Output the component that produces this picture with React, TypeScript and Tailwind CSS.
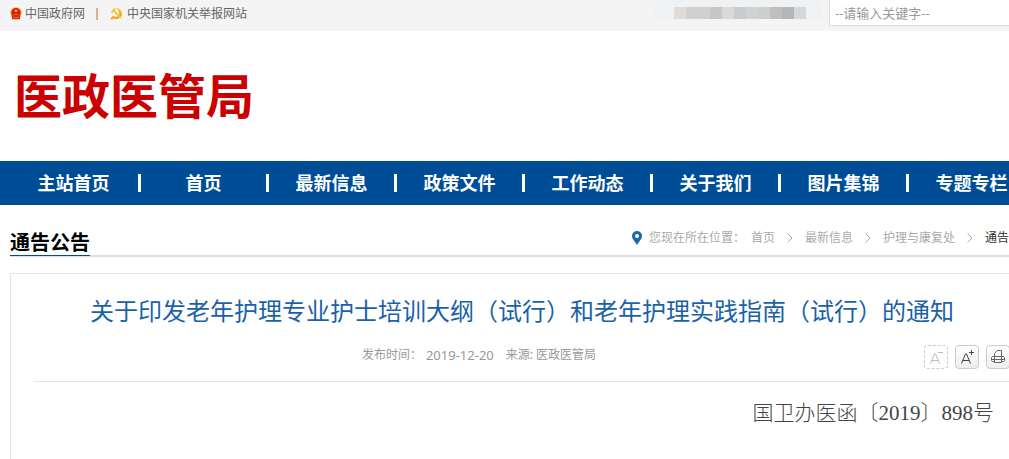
import React, { useState } from 'react';

const navItems = ['首页', '最新信息', '政策文件', '工作动态', '关于我们', '图片集锦', '专题专栏'];

const crumbs = ['首页', '最新信息', '护理与康复处'];

function EmblemIcon() {
  return (
    <svg viewBox="0 0 12 13" className="h-[13px] w-3 shrink-0" aria-hidden="true">
      <circle cx="6" cy="5.8" r="5.6" fill="#eea23c" />
      <circle cx="6" cy="5.8" r="4.7" fill="#dd1a10" />
      <path d="M6 1.8l.6 1.2 1.3.2-.9.9.2 1.3L6 4.8l-1.2.6.2-1.3-.9-.9 1.3-.2z" fill="#ffb52a" />
      <path d="M3.500 7.600h5" stroke="#f08a22" strokeWidth=".8" />
      <path d="M1.500 8.800h9L9.800 12.500l-2.200-.4-1.600.7-1.600-.7-2.200.4z" fill="#d4230f" />
      <path d="M2.400 9.800l2 .9h3.200l2-.9" stroke="#f5a623" strokeWidth=".7" fill="none" />
    </svg>
  );
}

function PartyIcon() {
  return (
    <svg viewBox="0 0 13 13" className="size-[13px] shrink-0" aria-hidden="true">
      <path d="M6.2.9c4.200.3 6.300 3.400 5.800 6.600-.5 3.200-3.800 5.200-7 4.400l-1.200-.6L2 12.800.5 11.500l1.800-2 .9-.4c2.300 1.500 5 .9 5.800-1.500C9.800 5.300 8.500 2.500 6.200.9z" fill="#f0a51a" />
      <path d="M.7 4.700L4 1l2 .8-1.100 1.400 6.900 7-1.500 1.500-6.800-7L2.300 6z" fill="#f8c832" />
      <path d="M7.200 1.600c3.200.9 4.500 3.200 4.100 5.600" stroke="#ffe36a" strokeWidth=".8" fill="none" />
    </svg>
  );
}

function PinIcon() {
  return (
    <svg viewBox="0 0 10 14" className="h-[14px] w-[10px] shrink-0" aria-hidden="true">
      <path d="M5 0a5 5 0 0 0-5 5c0 3 3 5.500 5 9 2-3.500 5-6 5-9a5 5 0 0 0-5-5zm0 3a2 2 0 1 1 0 4 2 2 0 0 1 0-4z" fill="#1a67ae" fillRule="evenodd" />
    </svg>
  );
}

function Chevron() {
  return (
    <span className="flex w-[30px] justify-center" aria-hidden="true">
      <svg viewBox="0 0 6 10" className="h-[10px] w-[6px]">
        <path d="M.5.5L5 5 .5 9.500" fill="none" stroke="#aaa" />
      </svg>
    </span>
  );
}

function TopBar() {
  const [keyword, setKeyword] = useState('');

  return (
    <div className="flex h-[31px] items-start justify-between bg-[#f4f4f4] pl-[10px] text-xs text-[#666]">
      <div className="flex h-[27px] items-center">
        <a href="#" className="flex items-center gap-[3px]">
          <EmblemIcon />
          中国政府网
        </a>
        <span className="ml-[11px] mr-3 h-3 w-0.5 bg-[#d8b48c]" />
        <a href="#" className="flex items-center gap-1">
          <PartyIcon />
          中央国家机关举报网站
        </a>
      </div>
      <div className="flex items-start">
        <div className="mr-[7px] flex h-[19px] w-[168px] items-end rounded-t-lg bg-[#f0f1f3] pl-5">
          <div className="flex h-3 shrink-0">
            <i className="w-3 bg-[#dfdbd9]" />
            <i className="w-3 bg-[#cfd0d1]" />
            <i className="w-3 bg-[#d0d0d0]" />
            <i className="w-3 bg-[#c8c6c4]" />
            <i className="w-3 bg-[#d8d9d9]" />
            <i className="w-3 bg-[#c9cbce]" />
            <i className="w-3 bg-[#d1d2d3]" />
            <i className="w-3 bg-[#cccfce]" />
            <i className="w-3 bg-[#bfbfbf]" />
            <i className="w-3 bg-[#b5b6b9]" />
            <i className="w-3 bg-[#d6d7da]" />
          </div>
        </div>
        <input
          type="text"
          aria-label="请输入关键字"
          placeholder="--请输入关键字--"
          value={keyword}
          onChange={(e) => setKeyword(e.target.value)}
          className="h-[26px] w-[180px] border border-t-0 border-r-0 border-[#ddd] bg-white px-[5px] text-[13px] outline-none placeholder:text-[#999]"
        />
      </div>
    </div>
  );
}

function Nav() {
  return (
    <nav className="flex h-11 items-center bg-[#004d97] pl-[9px] text-lg font-bold text-white">
      <a href="#" className="w-[129px] shrink-0 text-center">主站首页</a>
      {navItems.map((item) => (
        <div key={item} className="flex w-32 shrink-0 items-center">
          <span className="h-[18px] w-[3px] bg-white" />
          <a href="#" className="flex-1 text-center">{item}</a>
        </div>
      ))}
    </nav>
  );
}

export default function App() {
  const [large, setLarge] = useState(false);

  return (
    <div className="flex min-h-screen flex-col overflow-hidden bg-white font-['Noto_Sans','Noto_Sans_CJK_SC',sans-serif]">
      <TopBar />

      <header className="flex h-[130px] items-center pl-[14px]">
        <h1 className="text-5xl leading-none font-bold text-[#c00]">医政医管局</h1>
      </header>

      <Nav />

      {/* the content column runs a little past the right edge */}
      <main className="-mr-[27px] ml-[10px] flex flex-1 flex-col">
        <div className="mt-5 flex h-8 items-stretch justify-between border-b-2 border-[#dedede]">
          <h2 className="-mb-px border-b border-[#004d97] pt-1 text-xl leading-7 font-bold text-black">通告公告</h2>
          <div className="flex items-center pr-[27px] pb-1 text-xs whitespace-nowrap text-[#aaa]">
            <PinIcon />
            <span className="ml-[7px] w-[102px]">您现在所在位置：</span>
            {crumbs.map((c) => (
              <React.Fragment key={c}>
                <a href="#">{c}</a>
                <Chevron />
              </React.Fragment>
            ))}
            <span className="text-[#333]">通告</span>
          </div>
        </div>

        <article className="mt-4 flex-1 border border-b-0 border-[#e5e5e5] pr-[25px] pl-[23px]">
          <h3 className="mt-[21px] text-center text-2xl leading-8 whitespace-nowrap text-[#1a62a8]">
            关于印发老年护理专业护士培训大纲（试行）和老年护理实践指南（试行）的通知
          </h3>
          <div className="flex h-[55px] items-start border-b border-[#e5e5e5] pt-[18px] text-[#999]">
            <p className="flex flex-1 items-center justify-center text-xs leading-5">
              <span>发布时间：</span>
              <span className="ml-1 text-[13px]">2019-12-20</span>
              <span className="ml-3">来源: 医政医管局</span>
            </p>
            <div className="flex gap-[7px]">
              <button
                type="button"
                aria-label="缩小字体"
                onClick={() => setLarge(false)}
                className="size-6 rounded-sm border border-dashed border-[#ccc] bg-white"
              >
                <svg viewBox="0 0 22 22" fill="none" stroke="#bbb" className="size-[22px]">
                  <path d="M5.500 17.500L9.500 8h1l4 9.500M7 14.500h6M13 6.500h5" />
                </svg>
              </button>
              <button
                type="button"
                aria-label="放大字体"
                onClick={() => setLarge(true)}
                className="size-6 rounded-sm border border-[#ccc] bg-linear-to-b from-white to-[#eee]"
              >
                <svg viewBox="0 0 22 22" fill="none" stroke="#444" className="size-[22px]">
                  <path d="M5.500 17.500L9.500 8h1l4 9.500M7 14.500h6M13 6.500h5M15.500 4v5" />
                </svg>
              </button>
              <button
                type="button"
                aria-label="打印"
                onClick={() => window.print()}
                className="size-6 rounded-sm border border-[#ccc] bg-linear-to-b from-white to-[#eee]"
              >
                <svg viewBox="0 0 22 22" fill="none" stroke="#666" className="size-[22px]">
                  <path d="M7.500 10V7.500l2.500-3h4.500V10M7.500 10.500h-2l-1 1v3l1 1h2M14.500 10.500h2l1 1v3l-1 1h-2M7 10.500h8M7.500 10.500v6h7v-6M5 13.500h12" />
                </svg>
              </button>
            </div>
          </div>
          <p
            className={`mt-4 pr-4 text-right font-light text-[#444] font-['Liberation_Serif','Noto_Sans_CJK_SC',serif] ${
              large ? 'text-[25px]' : 'text-[21px]'
            }`}
          >
            国卫办医函〔2019〕898号
          </p>
        </article>
      </main>
    </div>
  );
}
